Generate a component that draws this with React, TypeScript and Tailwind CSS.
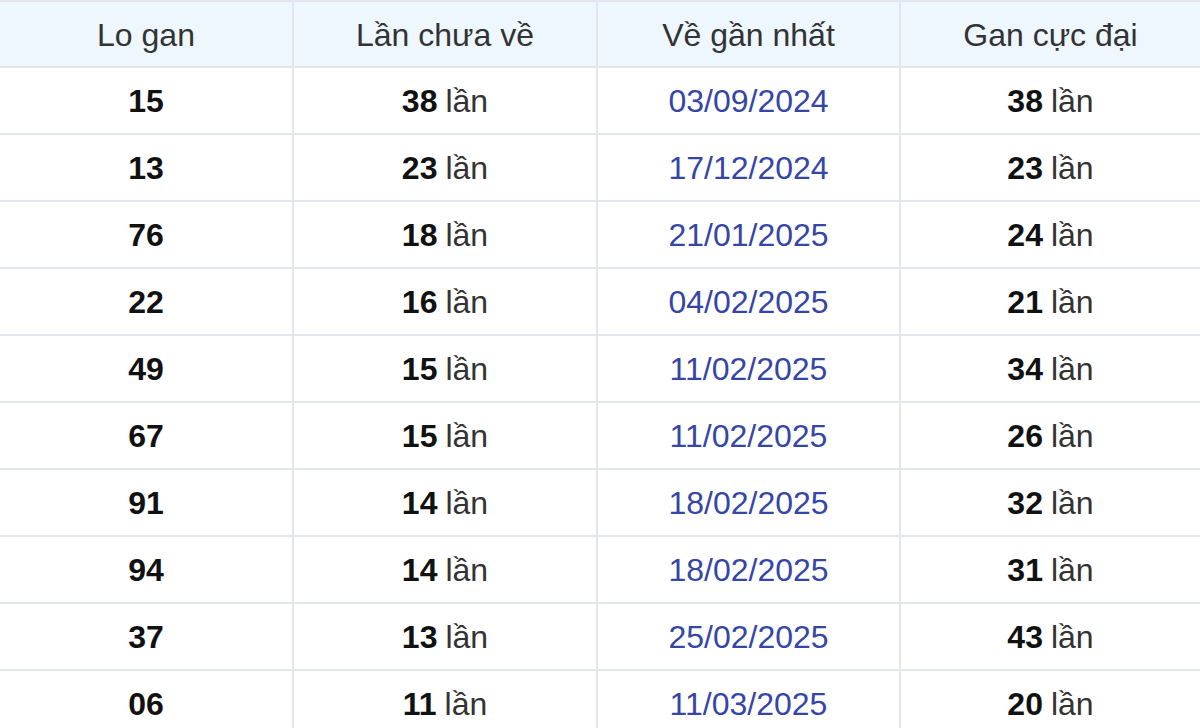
import React from "react";

const rows = [
  ["15", "38", "03/09/2024", "38"],
  ["13", "23", "17/12/2024", "23"],
  ["76", "18", "21/01/2025", "24"],
  ["22", "16", "04/02/2025", "21"],
  ["49", "15", "11/02/2025", "34"],
  ["67", "15", "11/02/2025", "26"],
  ["91", "14", "18/02/2025", "32"],
  ["94", "14", "18/02/2025", "31"],
  ["37", "13", "25/02/2025", "43"],
  ["06", "11", "11/03/2025", "20"],
];

const cols = "grid grid-cols-[294px_304px_303px_1fr]";
const cell = "flex items-center justify-center border-r-2 border-[#e3e6ea] last:border-r-0";

export default function App() {
  return (
    <div className="w-[1200px] h-[728px] overflow-hidden bg-white font-['Liberation_Sans',Arial,sans-serif] text-[32px]">
      <div className={`${cols} h-[68px] bg-[#eef6fe] border-t-2 border-b-2 border-[#e3e6ea] text-[#333]`}>
        <div className={`${cell} pt-[2px]`}>Lo gan</div>
        <div className={`${cell} pt-[2px]`}>Lần chưa về</div>
        <div className={`${cell} pt-[2px]`}>Về gần nhất</div>
        <div className={`${cell} pt-[2px]`}>Gan cực đại</div>
      </div>
      {rows.map((r, i) => (
        <div key={i} className={`${cols} h-[67px] border-b-2 border-[#e3e6ea]`}>
          <div className={`${cell} font-bold text-[#111]`}>{r[0]}</div>
          <div className={`${cell} text-[#333]`}>
            <b className="text-[#111] mr-2">{r[1]}</b>lần
          </div>
          <div className={`${cell} text-[#3546a6]`}>{r[2]}</div>
          <div className={`${cell} text-[#333]`}>
            <b className="text-[#111] mr-2">{r[3]}</b>lần
          </div>
        </div>
      ))}
    </div>
  );
}
